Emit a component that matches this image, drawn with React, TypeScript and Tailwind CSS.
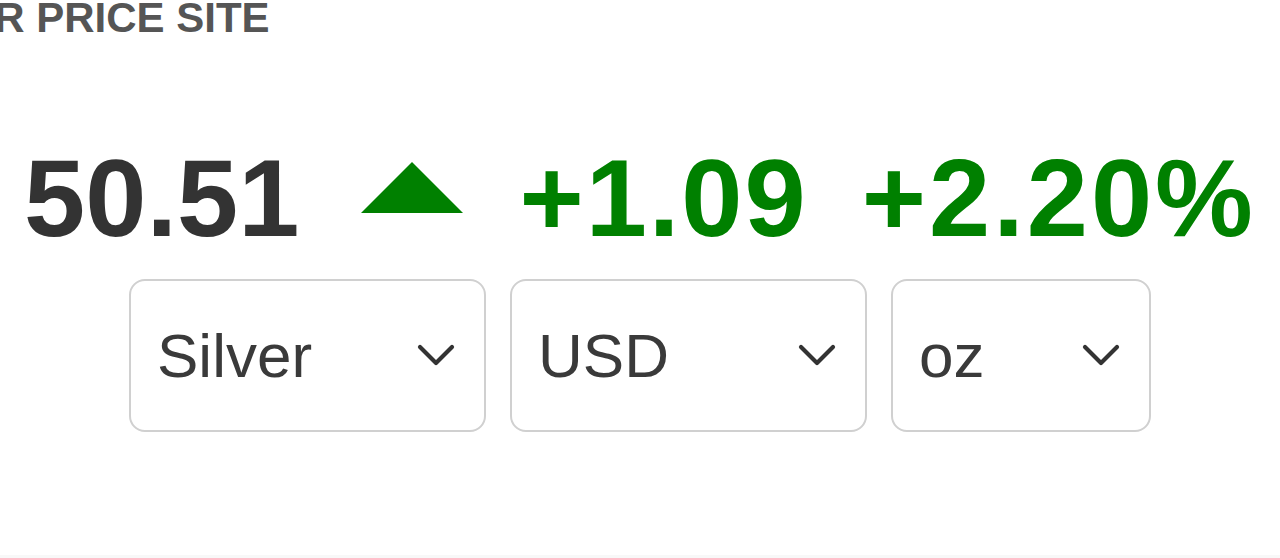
import { useState } from 'react'

const METALS = ['Silver', 'Gold', 'Platinum', 'Palladium']
const CURRENCIES = ['USD', 'EUR', 'GBP', 'CAD']
const UNITS = ['oz', 'g', 'kg']

interface PickerProps {
  value: string
  options: string[]
  onChange: (v: string) => void
  width: string
}

function Chevron() {
  return (
    <svg width="38" height="27" viewBox="0 0 38 27" fill="none" className="shrink-0">
      <polyline points="3,5 19,21 35,5" stroke="#333" strokeWidth="4.2" strokeLinecap="round" strokeLinejoin="round" />
    </svg>
  )
}

function Picker({ value, options, onChange, width }: PickerProps) {
  return (
    <label className={`relative flex items-center justify-between h-[153px] ${width} pl-[26px] pr-[29px] border-2 border-[#d0d0d0] rounded-[16px] bg-white`}>
      <span className="text-[62px] leading-none text-[#3a3a3a]">{value}</span>
      <Chevron />
      <select
        value={value}
        onChange={e => onChange(e.target.value)}
        className="absolute inset-0 opacity-0 cursor-pointer"
      >
        {options.map(o => (
          <option key={o} value={o}>{o}</option>
        ))}
      </select>
    </label>
  )
}

export default function App() {
  const [metal, setMetal] = useState('Silver')
  const [currency, setCurrency] = useState('USD')
  const [unit, setUnit] = useState('oz')

  return (
    <div className="h-[558px] w-[1280px] overflow-hidden bg-white flex flex-col font-['Liberation_Sans',Arial,sans-serif]">
      <div className="flex-1">
        <h1 className="mt-[-3px] ml-[-124px] text-[42px] leading-none font-bold text-[#555] whitespace-nowrap">
          SILVER PRICE SITE
        </h1>

        {/* price + change */}
        <div className="mt-[104px] flex items-start justify-center">
          <span className="text-[110px] leading-none font-bold text-[#333]">50.51</span>
          <svg width="102" height="51" viewBox="0 0 102 51" className="self-end mb-[40px] ml-[62px]">
            <polygon points="51,0 102,51 0,51" fill="#008000" />
          </svg>
          <span className="ml-[56px] text-[110px] leading-none font-bold tracking-[2px] text-[#008000]">+1.09</span>
          <span className="ml-[54px] text-[110px] leading-none font-bold tracking-[3px] text-[#008000]">+2.20%</span>
        </div>

        <div className="mt-[26px] flex justify-center gap-[24px]">
          <Picker value={metal} options={METALS} onChange={setMetal} width="w-[357px]" />
          <Picker value={currency} options={CURRENCIES} onChange={setCurrency} width="w-[357px]" />
          <Picker value={unit} options={UNITS} onChange={setUnit} width="w-[260px]" />
        </div>
      </div>
      <div className="h-[3px] bg-[#f8f8f8]" />
    </div>
  )
}
